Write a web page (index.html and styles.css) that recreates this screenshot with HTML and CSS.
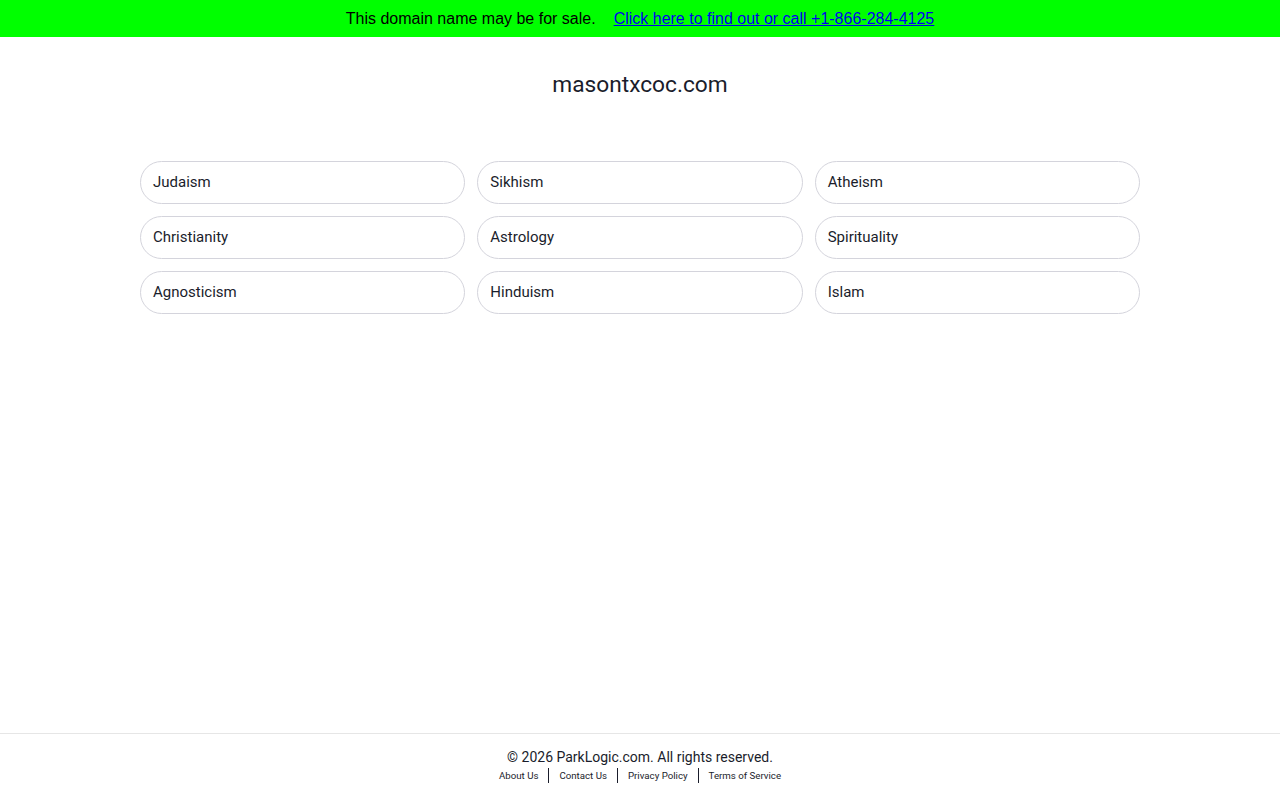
FILE: index.html
```html
<!DOCTYPE html>
<html lang="en">
<head>
<meta charset="utf-8">
<title>masontxcoc.com</title>
<link rel="stylesheet" href="styles.css">
</head>
<body>
<div class="sale-bar">
  <span class="sale-text">This domain name may be for sale.</span>
  <a class="sale-link" href="#">Click here to find out or call +1-866-284-4125</a>
</div>
<main class="page">
  <h1 class="domain">masontxcoc.com</h1>
  <div class="links">
    <a class="link" href="#">Judaism</a>
    <a class="link" href="#">Sikhism</a>
    <a class="link" href="#">Atheism</a>
    <a class="link" href="#">Christianity</a>
    <a class="link" href="#">Astrology</a>
    <a class="link" href="#">Spirituality</a>
    <a class="link" href="#">Agnosticism</a>
    <a class="link" href="#">Hinduism</a>
    <a class="link" href="#">Islam</a>
  </div>
</main>
<footer class="footer">
  <div class="copy">© 2026 ParkLogic.com. All rights reserved.</div>
  <nav class="footer-nav">
    <a href="#">About Us</a>
    <a href="#">Contact Us</a>
    <a href="#">Privacy Policy</a>
    <a href="#">Terms of Service</a>
  </nav>
</footer>
</body>
</html>
```

FILE: styles.css
```css
html, body {
  margin: 0;
  padding: 0;
  height: 100%;
}

body {
  display: flex;
  flex-direction: column;
  background: #ffffff;
  font-family: Roboto, "Liberation Sans", sans-serif;
  color: #1a1d2b;
}

.sale-bar {
  height: 37px;
  background: #00ff00;
  display: flex;
  align-items: center;
  justify-content: center;
  gap: 18px;
  font-family: "Liberation Sans", Arial, sans-serif;
  font-size: 16px;
  color: #000;
}

.sale-link {
  color: #0000ee;
  text-decoration: underline;
}

.page {
  flex: 1;
  width: 1000px;
  margin: 0 auto;
}

.domain {
  margin: 34px 0 0;
  height: 28px;
  text-align: center;
  font-weight: 400;
  font-size: 22.7px;
  line-height: 28px;
  color: #1a1d2b;
}

.links {
  margin-top: 62px;
  display: grid;
  grid-template-columns: repeat(3, 1fr);
  gap: 12px;
}

.link {
  display: flex;
  align-items: center;
  height: 43px;
  box-sizing: border-box;
  padding: 0 12px 2px;
  border: 1px solid #d4d4dc;
  border-radius: 22px;
  font-size: 15px;
  color: #1a1d2b;
  text-decoration: none;
}

.footer {
  border-top: 1px solid #e6e6e6;
  padding: 14px 0 17px;
  text-align: center;
}

.copy {
  font-size: 14px;
  line-height: 18px;
  color: #1a1d2b;
}

.footer-nav {
  display: flex;
  justify-content: center;
  margin-top: 2px;
}

.footer-nav a {
  font-size: 9.7px;
  line-height: 15px;
  color: #1a1d2b;
  text-decoration: none;
  padding: 0 10px;
  border-left: 1px solid #1a1d2b;
}

.footer-nav a:first-child {
  border-left: none;
}
```
